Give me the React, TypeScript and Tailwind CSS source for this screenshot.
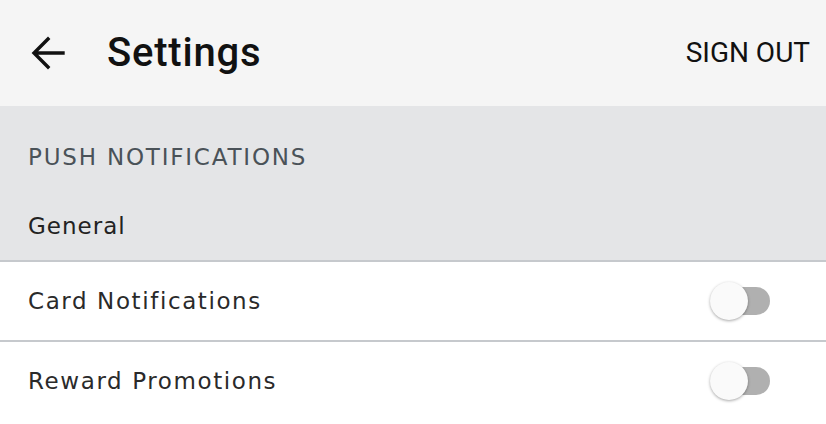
import React, { useState } from 'react';

const Toggle: React.FC<{ on: boolean; onChange: (v: boolean) => void }> = ({ on, onChange }) => (
  <button
    type="button"
    onClick={() => onChange(!on)}
    className="relative w-[62px] h-[40px] flex items-center"
  >
    <span className={`absolute left-[8px] right-[2px] h-[28px] rounded-full ${on ? 'bg-[#8fb7e8]' : 'bg-[#b0b0b0]'}`}></span>
    <span
      className={`absolute top-[1px] w-[38px] h-[38px] rounded-full bg-[#fafafa] shadow-[0_1px_3px_rgba(0,0,0,0.35)] ${on ? 'left-[24px]' : 'left-0'}`}
    ></span>
  </button>
);

const Row: React.FC<{ label: string; on: boolean; onChange: (v: boolean) => void }> = ({ label, on, onChange }) => (
  <div className="h-[78px] flex items-center justify-between pl-[28px] pr-[54px] bg-white">
    <span className="text-[23px] tracking-[1.6px] text-[#2a2a2a] font-['DejaVu_Sans',sans-serif]">{label}</span>
    <Toggle on={on} onChange={onChange} />
  </div>
);

export default function App() {
  const [card, setCard] = useState(false);
  const [reward, setReward] = useState(false);

  return (
    <div className="w-[826px] h-[424px] bg-white overflow-hidden">
      <div className="h-[106px] bg-[#f5f5f5] flex items-center justify-between pl-[24px] pr-[16px]">
        <div className="flex items-center">
          <svg width="48" height="48" viewBox="0 0 48 48" className="text-[#111]">
            <path d="M39 24H11M24 10L10 24l14 14" fill="none" stroke="currentColor" strokeWidth="3.4" strokeLinecap="square" />
          </svg>
          <h1 className="ml-[35px] text-[40px] tracking-[0.8px] font-medium text-[#111] font-['Roboto',sans-serif]">Settings</h1>
        </div>
        <button className="text-[28px] text-[#111] font-['Roboto',sans-serif]">SIGN OUT</button>
      </div>

      <div className="bg-[#e4e5e7]">
        <div className="h-[100px] flex items-center pl-[28px] pt-[2px]">
          <span className="text-[23px] tracking-[1.8px] text-[#4a5258] font-['DejaVu_Sans',sans-serif]">PUSH NOTIFICATIONS</span>
        </div>
        <div className="h-[54px] flex items-start pl-[28px] pt-[3px]">
          <span className="text-[23px] tracking-[1px] text-[#222] font-['DejaVu_Sans',sans-serif]">General</span>
        </div>
      </div>

      <div className="border-t-2 border-[#c6c9cd]">
        <Row label="Card Notifications" on={card} onChange={setCard} />
      </div>
      <div className="border-t-2 border-[#c6c9cd]">
        <Row label="Reward Promotions" on={reward} onChange={setReward} />
      </div>
    </div>
  );
}
